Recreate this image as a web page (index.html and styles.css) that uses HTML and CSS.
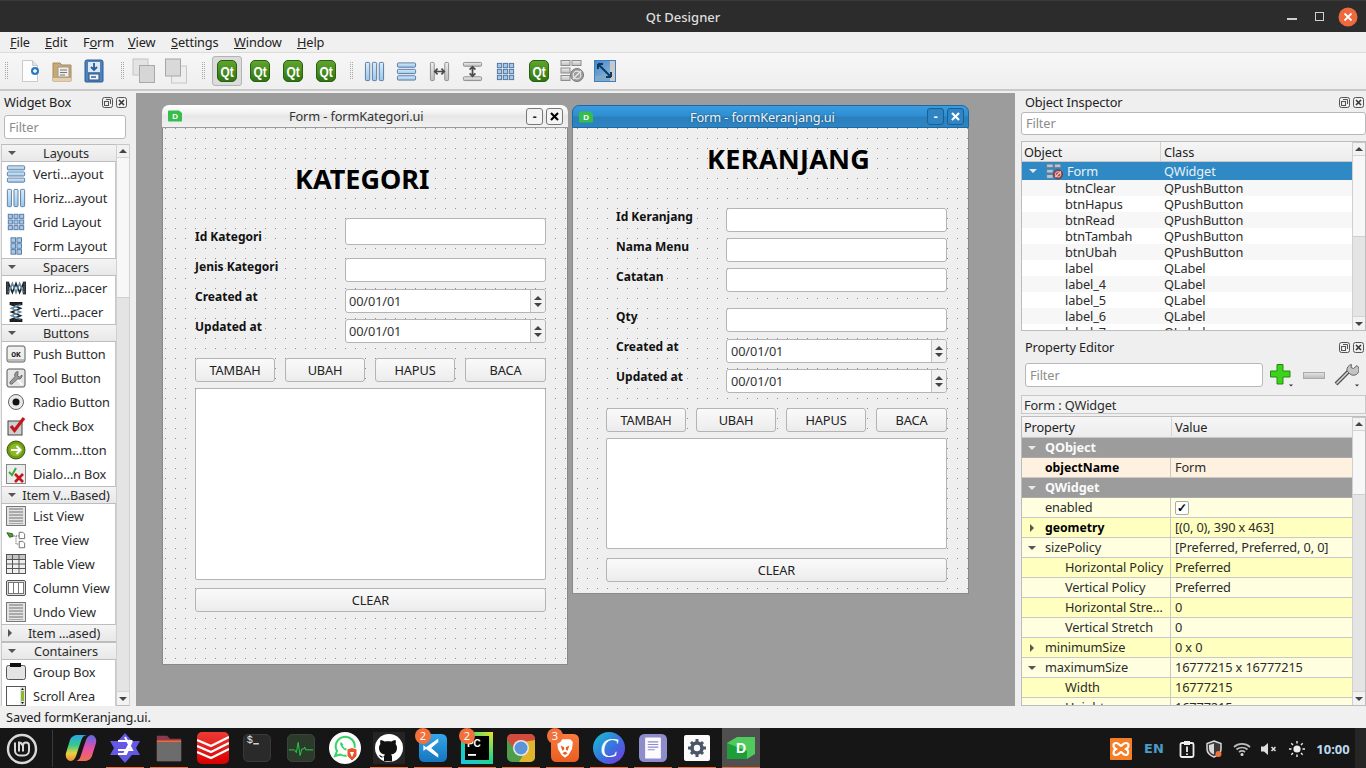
FILE: index.html
```html
<!DOCTYPE html>
<html lang="en">
<head>
<meta charset="utf-8">
<title>Qt Designer</title>
<link rel="stylesheet" href="styles.css">
</head>
<body>
<svg class="defs" aria-hidden="true">
<defs>
<linearGradient id="gq" x1="0" y1="0" x2="0" y2="1"><stop offset="0" stop-color="#5fa62e"/><stop offset="1" stop-color="#2f7410"/></linearGradient>
<linearGradient id="gb" x1="0" y1="0" x2="0" y2="1"><stop offset="0" stop-color="#d6ecfb"/><stop offset="1" stop-color="#9cc6ea"/></linearGradient>
<linearGradient id="gg" x1="0" y1="0" x2="0" y2="1"><stop offset="0" stop-color="#eeeeee"/><stop offset="1" stop-color="#bdbdbd"/></linearGradient>
<linearGradient id="gc1" x1="0" y1="0" x2="0" y2="1"><stop offset="0" stop-color="#2aa6e8"/><stop offset=".4" stop-color="#38c98a"/><stop offset=".7" stop-color="#e8d23c"/><stop offset="1" stop-color="#ef8a3c"/></linearGradient>
<linearGradient id="gc2" x1="0" y1="0" x2="0" y2="1"><stop offset="0" stop-color="#f0704c"/><stop offset=".5" stop-color="#e44fa8"/><stop offset="1" stop-color="#5a6ae6"/></linearGradient>
<linearGradient id="gcan" x1="0" y1="0" x2="1" y2="1"><stop offset="0" stop-color="#14c6cf"/><stop offset=".55" stop-color="#3a6fe0"/><stop offset="1" stop-color="#7a35e0"/></linearGradient>
<linearGradient id="gpc" x1="0" y1="1" x2="1" y2="0"><stop offset="0" stop-color="#19c3e8"/><stop offset=".55" stop-color="#21d789"/><stop offset="1" stop-color="#f5e020"/></linearGradient>
<linearGradient id="gvs" x1="0" y1="0" x2="0" y2="1"><stop offset="0" stop-color="#33a6e8"/><stop offset="1" stop-color="#1575c0"/></linearGradient>
<linearGradient id="gred" x1="0" y1="0" x2="0" y2="1"><stop offset="0" stop-color="#ee3b34"/><stop offset="1" stop-color="#d60000"/></linearGradient>
<linearGradient id="gbr" x1="0" y1="0" x2="0" y2="1"><stop offset="0" stop-color="#fb7a3c"/><stop offset="1" stop-color="#e85e20"/></linearGradient>
<linearGradient id="gadj" x1="0" y1="0" x2="1" y2="1"><stop offset="0" stop-color="#3f86c6"/><stop offset="1" stop-color="#a5c4dd"/></linearGradient>
<clipPath id="crnd"><rect width="28" height="28" rx="5"/></clipPath>

<symbol id="qt" viewBox="0 0 20 22"><rect x=".5" y=".5" width="19" height="21" rx="4.5" fill="url(#gq)" stroke="#2b5f12"/><text x="10" y="16.500" text-anchor="middle" class="qtxt" textLength="13" lengthAdjust="spacingAndGlyphs">Qt</text></symbol>

<symbol id="new" viewBox="0 0 20 24"><path d="M2.500 1.500h10l5 5v16h-15z" fill="#fdfdfd" stroke="#c9c9c9"/><path d="M12.500 1.500v5h5" fill="#e2e2e2" stroke="#c9c9c9"/><circle cx="15" cy="12" r="4" fill="#2b7bc4"/><path d="M13 12h4M15 10v4" stroke="#fff" stroke-width="1.400"/></symbol>
<symbol id="open" viewBox="0 0 20 24"><path d="M1 4h7l2 2h9v16H1z" fill="#c9a878" stroke="#a98a5c"/><rect x="6" y="8" width="11" height="10" fill="#f4efe5" stroke="#999"/><path d="M8 11h7M8 13.500h7M8 16h5" stroke="#777"/><path d="M1 19h18v3H1z" fill="#e3cfa8"/></symbol>
<symbol id="save" viewBox="0 0 20 24"><path d="M3 1h14a2 2 0 0 1 2 2v19a1 1 0 0 1-1 1H2a1 1 0 0 1-1-1V3a2 2 0 0 1 2-2z" fill="#4c82bd" stroke="#2b5b93"/><rect x="4" y="3" width="12" height="10" fill="#dfe9f4"/><path d="M10 4v6M7 8l3 3 3-3" stroke="#2b5b93" stroke-width="1.800" fill="none"/><rect x="5" y="15" width="10" height="6" fill="#f2f2f2" stroke="#29558a"/><path d="M7 18h5" stroke="#29558a" stroke-width="1.400"/></symbol>
<symbol id="copy1" viewBox="0 0 24 26"><rect x="1" y="1" width="15" height="16" fill="#e3e3e3" stroke="#c4c4c4"/><rect x="7.500" y="7.500" width="15" height="17" fill="#d6d6d6" stroke="#a9a9a9"/></symbol>
<symbol id="copy2" viewBox="0 0 24 26"><rect x="7.500" y="8" width="15" height="17" fill="#eeeeee" stroke="#c8c8c8"/><rect x="1.500" y="1" width="15" height="17" fill="#d9d9d9" stroke="#a6a6a6"/></symbol>

<symbol id="lh" viewBox="0 0 22 22"><g fill="url(#gb)" stroke="#56789f"><rect x="1.500" y="1.500" width="4.500" height="19" rx="1"/><rect x="8.750" y="1.500" width="4.500" height="19" rx="1"/><rect x="16" y="1.500" width="4.500" height="19" rx="1"/></g></symbol>
<symbol id="lv" viewBox="0 0 22 22"><g fill="url(#gb)" stroke="#56789f"><rect x="1.500" y="2" width="19" height="4.500" rx="1"/><rect x="1.500" y="8.750" width="19" height="4.500" rx="1"/><rect x="1.500" y="15.500" width="19" height="4.500" rx="1"/></g></symbol>
<symbol id="lg" viewBox="0 0 22 22"><g fill="#a8c8e8" stroke="#4f75a0"><rect x="2.500" y="2.500" width="4.500" height="4.500"/><rect x="8.750" y="2.500" width="4.500" height="4.500"/><rect x="15" y="2.500" width="4.500" height="4.500"/><rect x="2.500" y="8.750" width="4.500" height="4.500"/><rect x="8.750" y="8.750" width="4.500" height="4.500"/><rect x="15" y="8.750" width="4.500" height="4.500"/><rect x="2.500" y="15" width="4.500" height="4.500"/><rect x="8.750" y="15" width="4.500" height="4.500"/><rect x="15" y="15" width="4.500" height="4.500"/></g></symbol>
<symbol id="lf" viewBox="0 0 22 22"><g fill="#a8c8e8" stroke="#4f75a0"><rect x="5.500" y="2" width="5" height="5"/><rect x="12" y="2" width="5" height="5"/><rect x="5.500" y="8.500" width="5" height="5"/><rect x="12" y="8.500" width="5" height="5"/><rect x="5.500" y="15" width="5" height="5"/><rect x="12" y="15" width="5" height="5"/></g></symbol>
<symbol id="sh" viewBox="0 0 22 22"><g fill="url(#gg)" stroke="#8d8d8d"><rect x="1.500" y="1.500" width="4" height="19" rx="1"/><rect x="16.500" y="1.500" width="4" height="19" rx="1"/></g><path d="M7 11h8M9 8l-3 3 3 3M13 8l3 3-3 3" stroke="#4a4a4a" stroke-width="1.800" fill="none"/></symbol>
<symbol id="sv" viewBox="0 0 22 22"><g fill="url(#gg)" stroke="#8d8d8d"><rect x="1.500" y="1.500" width="19" height="4" rx="1"/><rect x="1.500" y="16.500" width="19" height="4" rx="1"/></g><path d="M11 6v10M8 9l3-3 3 3M8 13l3 3 3-3" stroke="#4a4a4a" stroke-width="1.800" fill="none"/></symbol>
<symbol id="broken" viewBox="0 0 24 24"><g fill="url(#gg)" stroke="#8d8d8d"><rect x="1" y="1.500" width="9" height="5"/><rect x="12" y="1.500" width="9" height="5"/><rect x="1" y="9" width="9" height="5"/><rect x="1" y="16.500" width="9" height="5"/></g><circle cx="17" cy="16" r="6.500" fill="#9c9c9c" stroke="#7a7a7a"/><path d="M13 20l8-8" stroke="#e6e6e6" stroke-width="1.600"/><circle cx="17" cy="16" r="3.800" fill="none" stroke="#e6e6e6" stroke-width="1.200"/></symbol>
<symbol id="brokenc" viewBox="0 0 24 24"><g fill="#b4c4d6" stroke="#66778c"><rect x="1" y="1.500" width="9" height="5"/><rect x="12" y="1.500" width="9" height="5"/><rect x="1" y="9" width="9" height="5"/><rect x="1" y="16.500" width="9" height="5"/></g><circle cx="17" cy="16" r="6.500" fill="#a84848" stroke="#743030"/><path d="M13 20l8-8" stroke="#e8d5d5" stroke-width="1.600"/><circle cx="17" cy="16" r="3.800" fill="none" stroke="#e8d5d5" stroke-width="1.200"/></symbol>
<symbol id="adj" viewBox="0 0 22 22"><rect x=".5" y=".5" width="21" height="21" fill="url(#gadj)" stroke="#3f7ec0"/><rect x="16" y="1" width="5" height="20" fill="#c9c9c9"/><rect x="1" y="16" width="15" height="5" fill="#7ea9c9"/><path d="M4 4l13 13M4 4h5M4 4v5M17 17h-5M17 17v-5" stroke="#0d3a63" stroke-width="2" fill="none"/></symbol>

<symbol id="spch" viewBox="0 0 22 18"><g stroke="#222" fill="#3c4a54"><rect x=".5" y="2.500" width="2.500" height="13"/><rect x="19" y="2.500" width="2.500" height="13"/></g><path d="M3 4l4 10 4-10 4 10 4-10" stroke="#222" stroke-width="1.700" fill="none"/><path d="M3 14l4-10 4 10 4-10 4 10" stroke="#5f8aa8" stroke-width="1.700" fill="none"/></symbol>
<symbol id="spcv" viewBox="0 0 18 22"><g stroke="#111" fill="#222"><rect x="2.500" y=".5" width="13" height="2.500"/><rect x="2.500" y="19" width="13" height="2.500"/></g><path d="M4 3l10 4-10 4 10 4-10 4" stroke="#222" stroke-width="1.700" fill="none"/><path d="M14 3l-10 4 10 4-10 4 10 4" stroke="#5f8aa8" stroke-width="1.700" fill="none"/></symbol>
<symbol id="ok" viewBox="0 0 20 20"><rect x="1" y="2" width="18" height="16" rx="2" fill="#efefef" stroke="#5c5c5c"/><rect x="2" y="15" width="16" height="2" fill="#bbb"/><text x="10" y="12.500" text-anchor="middle" class="oktxt">OK</text></symbol>
<symbol id="tool" viewBox="0 0 20 20"><rect x="1" y="1" width="18" height="18" rx="2" fill="#e6e6e6" stroke="#555"/><path d="M12 3.500a3.500 3.500 0 0 0-3 5L4 14c-1 1 1 3 2 2l5.500-5a3.500 3.500 0 0 0 4.500-4l-2.500 2-2-1 .5-2.500z" fill="#9a9a9a" stroke="#555" stroke-width=".8"/><path d="M12 12l4 5" stroke="#fff" stroke-width="2"/></symbol>
<symbol id="radio" viewBox="0 0 20 20"><circle cx="10" cy="10" r="7.500" fill="#e8e8e8" stroke="#666"/><circle cx="10" cy="10" r="3.500" fill="#111"/></symbol>
<symbol id="check" viewBox="0 0 20 20"><rect x="2" y="5" width="14" height="14" fill="#cfcfcf" stroke="#444"/><path d="M5 10l3.500 4.500L18 2" stroke="#c4161c" stroke-width="3.200" fill="none"/></symbol>
<symbol id="cmd" viewBox="0 0 20 20"><circle cx="10" cy="10" r="9" fill="#6c9a12" stroke="#3e5c08"/><circle cx="10" cy="10" r="6.500" fill="#8cb926"/><path d="M5 10h9M10.500 6l4 4-4 4" stroke="#fff" stroke-width="2" fill="none"/></symbol>
<symbol id="dlg" viewBox="0 0 20 20"><rect x=".5" y=".5" width="19" height="19" fill="#ececec" stroke="#888"/><path d="M3 8l3 3 4-7" stroke="#41a741" stroke-width="2" fill="none"/><path d="M9 10l8 8M17 10l-8 8" stroke="#c4161c" stroke-width="2.600"/></symbol>
<symbol id="list" viewBox="0 0 20 20"><rect x=".5" y=".5" width="19" height="19" fill="#e2e2e2" stroke="#777"/><rect x="3" y="2" width="14" height="16" fill="#aaaaaa"/><path d="M3 4.500h14M3 7.500h14M3 10.500h14M3 13.500h14M3 16.500h14" stroke="#e2e2e2"/></symbol>
<symbol id="tree" viewBox="0 0 22 20"><path d="M1 2l6 1 1 3-4 1z" fill="#4f9a3c" stroke="#2d5a1f"/><path d="M9 5.500h5M11 5.500v9h3" stroke="#444" stroke-dasharray="1 1" fill="none"/><path d="M14.500 1.500h4l2 2v5h-6z" fill="#fff" stroke="#666"/><path d="M14.500 11.500h4l2 2v5h-6z" fill="#fff" stroke="#666"/></symbol>
<symbol id="table" viewBox="0 0 20 20"><rect x=".5" y=".5" width="19" height="19" fill="#efefef" stroke="#555"/><rect x="1" y="1" width="18" height="4" fill="#c6c6c6"/><path d="M.5 5.500h19M.5 10h19M.5 14.500h19M6.500 .5v19M13 .5v19" stroke="#555"/></symbol>
<symbol id="column" viewBox="0 0 20 20"><rect x=".5" y="2.500" width="19" height="15" rx="1.500" fill="#dcdcdc" stroke="#555"/><rect x="2.500" y="4.500" width="15" height="11" fill="#fff" stroke="#777"/><path d="M7.500 4.500v11M12.500 4.500v11" stroke="#777"/></symbol>
<symbol id="group" viewBox="0 0 20 20"><rect x=".5" y="3.500" width="19" height="14" rx="2" fill="#e4e4e4" stroke="#555"/><rect x="4" y="1" width="11" height="4" fill="#111"/></symbol>
<symbol id="scroll" viewBox="0 0 20 20"><rect x=".5" y=".5" width="19" height="19" fill="#fff" stroke="#555"/><rect x="14" y="1" width="5" height="18" fill="#e4e4e4"/><rect x="15" y="5" width="3" height="10" fill="#8cb926"/><path d="M15 4l1.500-2L18 4zM15 16l1.500 2 1.500-2z" fill="#111"/></symbol>

<symbol id="float" viewBox="0 0 11 11"><rect x=".5" y=".5" width="10" height="10" rx="2" fill="none" stroke="#555"/><path d="M4 2.500h4.500V7" fill="none" stroke="#555"/><rect x="2.500" y="4.500" width="4" height="4" fill="none" stroke="#555"/></symbol>
<symbol id="close" viewBox="0 0 11 11"><rect x=".5" y=".5" width="10" height="10" rx="2" fill="none" stroke="#555"/><path d="M3 3l5 5M8 3l-5 5" stroke="#333" stroke-width="1.500"/></symbol>
<symbol id="plus" viewBox="0 0 24 24"><path d="M8 1.500h6v6.500h7v6h-7v7H8v-7H1.500V8H8z" fill="#3ed21e" stroke="#1c8f0a"/><path d="M20 21.500h4l-2 2z" fill="#333"/></symbol>
<symbol id="wrench" viewBox="0 0 26 26"><path d="M3 22L17 8" stroke="#555" stroke-width="4"/><path d="M3.500 21.500L17 8" stroke="#ddd" stroke-width="1.500"/><path d="M24 3.500l-3.500 3-2.500-1 .5-3A5.500 5.500 0 0 0 14 9l3 3a5.500 5.500 0 0 0 7-8.500z" fill="#c4c4c4" stroke="#666"/><path d="M22 22.500h4l-2 2z" fill="#333"/></symbol>
<symbol id="dicon" viewBox="0 0 16 12"><path d="M1 1.500a1 1 0 0 1 1-1h10l3 2.500v7.500a1 1 0 0 1-1 1H2a1 1 0 0 1-1-1z" fill="#36bd4c"/><text x="8" y="9" text-anchor="middle" class="dtxt">D</text></symbol>
<symbol id="wx" viewBox="0 0 17 17"><path d="M4.500 4.500l8 8M12.500 4.500l-8 8" stroke="currentColor" stroke-width="2.400"/></symbol>
<symbol id="wcl" viewBox="0 0 20 20"><circle cx="10" cy="10" r="9.500" fill="#ee6a3c"/><path d="M6.500 6.500l7 7M13.500 6.500l-7 7" stroke="#fff" stroke-width="1.800"/></symbol>

<symbol id="t-mint" viewBox="0 0 32 32"><circle cx="16" cy="16" r="14" fill="none" stroke="#d8d8d8" stroke-width="2.400"/><path d="M9 9.500v8a5 5 0 0 0 5 5h4a5 5 0 0 0 5-5v-5a3 3 0 0 0-6 0v6M16 12.500a3 3 0 0 0-3-3v9" fill="none" stroke="#d8d8d8" stroke-width="2"/></symbol>
<symbol id="t-cop" viewBox="0 0 32 32"><path d="M13 3h9c-3 0-5 2-6 6l-5 15c-1 3-3 5-6 5-3-1-5-4-4-8l4-13c1-3 4-5 8-5z" fill="url(#gc1)"/><path transform="rotate(180 16 16)" d="M13 3h9c-3 0-5 2-6 6l-5 15c-1 3-3 5-6 5-3-1-5-4-4-8l4-13c1-3 4-5 8-5z" fill="url(#gc2)"/></symbol>
<symbol id="t-quark" viewBox="0 0 32 32"><path d="M16 1l7 8h8l-4 7 4 7h-8l-7 8-7-8H1l4-7-4-7h8z" fill="#6458e4"/><path d="M9 9h13l-7 13M23 9l-6 13h-8M16 5l7 13H9" fill="none" stroke="#fff" stroke-width="2"/></symbol>
<symbol id="t-folder" viewBox="0 0 32 32"><path d="M3 3h11l3 3h12v24H3z" fill="#8a3a4c"/><rect x="3" y="8" width="26" height="2" fill="#e8703c"/><rect x="3" y="10" width="26" height="20" rx="1" fill="#6c6c6c"/></symbol>
<symbol id="t-todo" viewBox="0 0 32 32"><rect width="32" height="32" rx="5" fill="url(#gred)"/><path d="M0 13l14 6 18-9M0 19l14 6 18-9M0 25l14 6 18-9" transform="translate(0 -5)" fill="none" stroke="#fff" stroke-width="2.400"/></symbol>
<symbol id="t-term" viewBox="0 0 30 30"><rect x=".5" y=".5" width="29" height="29" rx="5" fill="#2a2a2a" stroke="#3c3c3c"/><text x="4" y="10" class="tt">$</text><path d="M11 10.500h6" stroke="#eee" stroke-width="1.400"/></symbol>
<symbol id="t-mon" viewBox="0 0 30 30"><rect x=".5" y=".5" width="29" height="29" rx="5" fill="#2c3a2c" stroke="#3c4a3c"/><path d="M2 17h6l2 3 2-11 2 14 2-7h2l1-2 1 3h8" fill="none" stroke="#29d34a" stroke-width="1"/></symbol>
<symbol id="t-wa" viewBox="0 0 32 32"><circle cx="16" cy="16" r="16" fill="#fdfdfd"/><path d="M6 24l2-5a9.500 9.500 0 1 1 3.500 3.500z" fill="none" stroke="#35d366" stroke-width="2"/><path d="M12 10c-1.500 1-1 3 1 5.500s4 3.500 5.500 2.500l-1.500-2-1 .5-2.500-3 .8-1z" fill="#35d366"/><path d="M18 17l5-1.500 5 1.500v7l-5 5-5-5z" fill="#e8552c" stroke="#fff"/><path d="M21 20h4l-1 3-1 2-1-2z" fill="#fff"/></symbol>
<symbol id="t-gh" viewBox="0 0 32 32"><rect width="32" height="32" fill="#242424"/><circle cx="16" cy="16" r="14" fill="#fff"/><path d="M11 29v-4c-3 1-4 0-5-2 1 0 2 1 3 1.500 1 .5 2 0 2-.5l1-1.500c-3-.5-6-2-6-6.500 0-1.500.5-3 1.500-4-.5-1-.5-2.500 0-4 1.500 0 3 1 4 1.500 2-.5 5-.5 7 0 1-.5 2.500-1.500 4-1.500.5 1.500.5 3 0 4 1 1 1.500 2.500 1.500 4 0 4.500-3 6-6 6.500 1 1 1 2 1 3v4z" fill="#111"/></symbol>
<symbol id="t-vs" viewBox="0 0 32 32"><rect width="32" height="32" rx="6" fill="url(#gvs)"/><path d="M22 5v22l-14-10-3 2.500v-7L8 15zM22 9l-8 7 8 7z" fill="#fff" fill-rule="evenodd"/></symbol>
<symbol id="t-pc" viewBox="0 0 32 32"><rect width="32" height="32" fill="url(#gpc)"/><rect x="4" y="4" width="24" height="24" fill="#000"/><text x="6" y="15" class="pctx">PC</text><rect x="7" y="22" width="8" height="1.800" fill="#fff"/></symbol>
<symbol id="t-chrome" viewBox="0 0 28 28"><g clip-path="url(#crnd)"><rect width="28" height="28" fill="#4f9c4a"/><path d="M0 0h28v8H14L7 14 0 6z" fill="#d34b3c"/><path d="M28 6v22H12l7-12-3-8z" fill="#e0b72c"/></g><circle cx="14" cy="14" r="8" fill="#e8e8e8"/><circle cx="14" cy="14" r="6.500" fill="#5b94d8"/></symbol>
<symbol id="t-brave" viewBox="0 0 32 32"><rect width="32" height="32" rx="6" fill="url(#gbr)"/><path d="M10 6h12l3 3-1 8-4 7-4 3-4-3-4-7-1-8z" fill="#fff"/><path d="M11 13l4 2v3l-2 1zM21 13l-4 2v3l2 1zM13 22l3-2 3 2-3 2z" fill="#e85e20"/></symbol>
<symbol id="t-canva" viewBox="0 0 32 32"><circle cx="16" cy="16" r="16" fill="url(#gcan)"/><text x="16" y="25" text-anchor="middle" class="canv">C</text></symbol>
<symbol id="t-note" viewBox="0 0 32 32"><rect width="32" height="32" rx="6" fill="#8f8ccc"/><rect x="7" y="4" width="18" height="24" rx="1" fill="#fbfbff"/><path d="M10 9h12M10 12h12M10 15h12M10 18h8" stroke="#8f8ccc" stroke-width="1.200"/></symbol>
<symbol id="t-set" viewBox="0 0 26 26"><rect width="26" height="26" rx="2" fill="#fbfbfb"/><circle cx="13" cy="13" r="5" fill="none" stroke="#4a5568" stroke-width="3.600"/><path d="M13 4v4M13 18v4M4 13h4M18 13h4M7 7l3 3M16 16l3 3M19 7l-3 3M10 16l-3 3" stroke="#4a5568" stroke-width="3"/></symbol>
<symbol id="t-des" viewBox="0 0 30 24"><path d="M1 7l10-6h18v17l-8 5H1z" fill="#4ecb5c"/><path d="M1 7l20 8v8H1z" fill="#1e9e3a"/><text x="15" y="17" text-anchor="middle" class="desx">D</text></symbol>
<symbol id="t-xampp" viewBox="0 0 22 22"><rect width="22" height="22" rx="1" fill="#f57e26"/><path d="M6 5c3 0 4 3 5 3s2-3 5-3 3 3 1.500 5L16 11l1.500 1c1.500 2 .5 5-1.500 5-3 0-4-3-5-3s-2 3-5 3-3-3-1.500-5L6 11 4.500 10C3 8 3 5 6 5z" fill="none" stroke="#fff" stroke-width="2.200"/></symbol>
<symbol id="t-clip" viewBox="0 0 16 18"><rect x="1.500" y="3" width="13" height="14" rx="1.500" fill="none" stroke="#eee" stroke-width="1.800"/><rect x="5" y="1" width="6" height="4" fill="#eee"/><path d="M8 6.500v5.500M8 13.500v1.500" stroke="#eee" stroke-width="1.800"/></symbol>
<symbol id="t-shield" viewBox="0 0 18 18"><path d="M9 1l7 2.500V9c0 4-3 6.500-7 8-4-1.500-7-4-7-8V3.500z" fill="#3a3a3a" stroke="#d8d8d8" stroke-width="1.500"/><path d="M9 3.500v11c-3-1-5-3-5-6V5z" fill="#d8d8d8"/><circle cx="13.500" cy="14" r="3" fill="#f2703a"/></symbol>
<symbol id="t-wifi" viewBox="0 0 18 14"><path d="M1 5a12 12 0 0 1 16 0M3.500 7.500a8.500 8.500 0 0 1 11 0M6 10a5 5 0 0 1 6 0" fill="none" stroke="#bbb" stroke-width="1.700"/><circle cx="9" cy="12.500" r="1.500" fill="#ddd"/></symbol>
<symbol id="t-vol" viewBox="0 0 18 14"><path d="M1 4.500h3L8 1v12L4 9.500H1z" fill="#ddd"/><path d="M11.500 5l4 4M15.500 5l-4 4" stroke="#ddd" stroke-width="1.600"/></symbol>
<symbol id="t-sun" viewBox="0 0 16 16"><circle cx="8" cy="8" r="3.600" fill="#eee"/><path d="M8 0v2.500M8 13.500V16M0 8h2.500M13.500 8H16M2.300 2.300L4 4M12 12l1.700 1.700M13.700 2.300L12 4M4 12l-1.700 1.700" stroke="#eee" stroke-width="1.400"/></symbol>
</defs>
</svg>

<div class="app">
  <header class="titlebar">
    <span class="apptitle">Qt Designer</span>
    <div class="wctl">
      <span class="wmin"></span>
      <span class="wmax"></span>
      <svg class="wclose"><use href="#wcl"/></svg>
    </div>
  </header>

  <nav class="menubar">
    <span class="mi m-file"><u>F</u>ile</span>
    <span class="mi m-edit"><u>E</u>dit</span>
    <span class="mi m-form">F<u>o</u>rm</span>
    <span class="mi m-view"><u>V</u>iew</span>
    <span class="mi m-set"><u>S</u>ettings</span>
    <span class="mi m-win"><u>W</u>indow</span>
    <span class="mi"><u>H</u>elp</span>
  </nav>

  <div class="toolbar">
    <span class="hd hd1"></span>
    <span class="tb w32"><svg class="i20x24"><use href="#new"/></svg></span>
    <span class="tb w32"><svg class="i20x24"><use href="#open"/></svg></span>
    <span class="tb w32"><svg class="i20x24"><use href="#save"/></svg></span>
    <span class="hd hd2"></span>
    <span class="tb w32"><svg class="i24x26"><use href="#copy1"/></svg></span>
    <span class="tb w32"><svg class="i24x26"><use href="#copy2"/></svg></span>
    <span class="hd hd3"></span>
    <span class="tb"><span class="tbsel"><svg class="i20x22"><use href="#qt"/></svg></span></span>
    <span class="tb"><svg class="i20x22"><use href="#qt"/></svg></span>
    <span class="tb"><svg class="i20x22"><use href="#qt"/></svg></span>
    <span class="tb"><svg class="i20x22"><use href="#qt"/></svg></span>
    <span class="hd hd4"></span>
    <span class="tb w32"><svg class="i21"><use href="#lh"/></svg></span>
    <span class="tb"><svg class="i21"><use href="#lv"/></svg></span>
    <span class="tb"><svg class="i21"><use href="#sh"/></svg></span>
    <span class="tb"><svg class="i21"><use href="#sv"/></svg></span>
    <span class="tb"><svg class="i21"><use href="#lg"/></svg></span>
    <span class="tb"><svg class="i20x22"><use href="#qt"/></svg></span>
    <span class="tb"><svg class="i24"><use href="#broken"/></svg></span>
    <span class="tb"><svg class="i22"><use href="#adj"/></svg></span>
  </div>

  <main class="main">
    <aside class="leftdock">
      <div class="docktitle">
        <span>Widget Box</span>
        <span class="dockbtns"><svg class="i11"><use href="#float"/></svg><svg class="i11"><use href="#close"/></svg></span>
      </div>
      <div class="filter wbfilter">Filter</div>
      <div class="wbox">
        <div class="wlist">
          <div class="cat"><i class="adown"></i><span>Layouts</span></div>
          <div class="wi"><svg class="i20"><use href="#lv"/></svg>Verti…ayout</div>
          <div class="wi"><svg class="i20"><use href="#lh"/></svg>Horiz…ayout</div>
          <div class="wi"><svg class="i20"><use href="#lg"/></svg>Grid Layout</div>
          <div class="wi"><svg class="i20"><use href="#lf"/></svg>Form Layout</div>
          <div class="cat"><i class="adown"></i><span>Spacers</span></div>
          <div class="wi"><svg class="i20"><use href="#spch"/></svg>Horiz…pacer</div>
          <div class="wi"><svg class="i20"><use href="#spcv"/></svg>Verti…pacer</div>
          <div class="cat"><i class="adown"></i><span>Buttons</span></div>
          <div class="wi"><svg class="i20"><use href="#ok"/></svg>Push Button</div>
          <div class="wi"><svg class="i20"><use href="#tool"/></svg>Tool Button</div>
          <div class="wi"><svg class="i20"><use href="#radio"/></svg>Radio Button</div>
          <div class="wi"><svg class="i20"><use href="#check"/></svg>Check Box</div>
          <div class="wi"><svg class="i20"><use href="#cmd"/></svg>Comm…tton</div>
          <div class="wi"><svg class="i20"><use href="#dlg"/></svg>Dialo…n Box</div>
          <div class="cat"><i class="adown"></i><span>Item V…Based)</span></div>
          <div class="wi"><svg class="i20"><use href="#list"/></svg>List View</div>
          <div class="wi"><svg class="i20"><use href="#tree"/></svg>Tree View</div>
          <div class="wi"><svg class="i20"><use href="#table"/></svg>Table View</div>
          <div class="wi"><svg class="i20"><use href="#column"/></svg>Column View</div>
          <div class="wi"><svg class="i20"><use href="#list"/></svg>Undo View</div>
          <div class="cat"><i class="aright"></i><span>Item …ased)</span></div>
          <div class="cat"><i class="adown"></i><span>Containers</span></div>
          <div class="wi"><svg class="i20"><use href="#group"/></svg>Group Box</div>
          <div class="wi"><svg class="i20"><use href="#scroll"/></svg>Scroll Area</div>
        </div>
        <div class="sbar">
          <span class="sb-btn"><i class="sup"></i></span>
          <span class="sb-handle h-wb"></span>
          <span class="sb-track"></span>
          <span class="sb-btn sb-end"><i class="sdn"></i></span>
        </div>
      </div>
    </aside>

    <section class="mdi">
      <article class="win win-kat">
        <div class="wt">
          <svg class="dicon"><use href="#dicon"/></svg>
          <span class="wtt wtt-kat">Form - formKategori.ui</span>
          <span class="wb">-</span><span class="wb wbx"><svg class="wxi"><use href="#wx"/></svg></span>
        </div>
        <div class="fb fb-kat">
          <h1 class="fh fh-kat">KATEGORI</h1>
          <div class="row">
            <label class="lb l10">Id Kategori</label><span class="inp"></span>
          </div>
          <div class="row mt16">
            <label class="lb">Jenis Kategori</label><span class="inp"></span>
          </div>
          <div class="row mt7 rd">
            <label class="lb ln1">Created at</label>
            <span class="inp date"><span class="dv">00/01/01</span><span class="spin"><i class="sup"></i><i class="sdn"></i></span></span>
          </div>
          <div class="row mt7 rd">
            <label class="lb ln1">Updated at</label>
            <span class="inp date"><span class="dv">00/01/01</span><span class="spin"><i class="sup"></i><i class="sdn"></i></span></span>
          </div>
          <div class="btns mt16">
            <span class="btn">TAMBAH</span><span class="btn">UBAH</span><span class="btn">HAPUS</span><span class="btn last">BACA</span>
          </div>
          <div class="ta ta-kat"></div>
          <span class="btn clear clear-kat">CLEAR</span>
        </div>
      </article>

      <article class="win win-ker">
        <div class="wt wt-act">
          <svg class="dicon"><use href="#dicon"/></svg>
          <span class="wtt wtt-ker">Form - formKeranjang.ui</span>
          <span class="wb">-</span><span class="wb wbx"><svg class="wxi"><use href="#wx"/></svg></span>
        </div>
        <div class="fb fb-ker">
          <h1 class="fh fh-ker">KERANJANG</h1>
          <div class="row rk"><label class="lb">Id Keranjang</label><span class="inp"></span></div>
          <div class="row rk mt6"><label class="lb">Nama Menu</label><span class="inp"></span></div>
          <div class="row rk mt6"><label class="lb">Catatan</label><span class="inp"></span></div>
          <div class="row rk mt16"><label class="lb">Qty</label><span class="inp"></span></div>
          <div class="row rk mt7 rd">
            <label class="lb ln1">Created at</label>
            <span class="inp date"><span class="dv">00/01/01</span><span class="spin"><i class="sup"></i><i class="sdn"></i></span></span>
          </div>
          <div class="row rk mt7 rd">
            <label class="lb ln1">Updated at</label>
            <span class="inp date"><span class="dv">00/01/01</span><span class="spin"><i class="sup"></i><i class="sdn"></i></span></span>
          </div>
          <div class="btns mt16">
            <span class="btn">TAMBAH</span><span class="btn">UBAH</span><span class="btn">HAPUS</span><span class="btn last">BACA</span>
          </div>
          <div class="ta ta-ker"></div>
          <span class="btn clear clear-ker">CLEAR</span>
        </div>
      </article>
    </section>

    <aside class="rightdock">
      <div class="docktitle rtitle">
        <span>Object Inspector</span>
        <span class="dockbtns"><svg class="i11"><use href="#float"/></svg><svg class="i11"><use href="#close"/></svg></span>
      </div>
      <div class="filter oifilter">Filter</div>
      <div class="oi">
        <div class="oi-main">
          <div class="thead oi-cols"><span>Object</span><span>Class</span></div>
          <div class="oir sel"><i class="adown white"></i><svg class="i18"><use href="#brokenc"/></svg><span class="fname">Form</span><span class="cls">QWidget</span></div>
          <div class="oir alt"><span class="oname">btnClear</span><span class="cls">QPushButton</span></div>
          <div class="oir"><span class="oname">btnHapus</span><span class="cls">QPushButton</span></div>
          <div class="oir alt"><span class="oname">btnRead</span><span class="cls">QPushButton</span></div>
          <div class="oir"><span class="oname">btnTambah</span><span class="cls">QPushButton</span></div>
          <div class="oir alt"><span class="oname">btnUbah</span><span class="cls">QPushButton</span></div>
          <div class="oir"><span class="oname">label</span><span class="cls">QLabel</span></div>
          <div class="oir alt"><span class="oname">label_4</span><span class="cls">QLabel</span></div>
          <div class="oir"><span class="oname">label_5</span><span class="cls">QLabel</span></div>
          <div class="oir alt"><span class="oname">label_6</span><span class="cls">QLabel</span></div>
          <div class="oir"><span class="oname">label_7</span><span class="cls">QLabel</span></div>
        </div>
        <div class="sbar">
          <span class="sb-btn"><i class="sup"></i></span>
          <span class="sb-handle h-oi"></span>
          <span class="sb-track"></span>
          <span class="sb-btn sb-end"><i class="sdn"></i></span>
        </div>
      </div>
      <div class="docktitle rtitle pe-title">
        <span>Property Editor</span>
        <span class="dockbtns"><svg class="i11"><use href="#float"/></svg><svg class="i11"><use href="#close"/></svg></span>
      </div>
      <div class="pe-tools">
        <div class="filter pefilter">Filter</div>
        <svg class="i24 plus"><use href="#plus"/></svg>
        <span class="minus"></span>
        <svg class="i26"><use href="#wrench"/></svg>
      </div>
      <div class="pe-obj">Form : QWidget</div>
      <div class="pe">
        <div class="pe-main">
          <div class="thead pe-cols"><span>Property</span><span>Value</span></div>
          <div class="pr grp"><span class="pk"><i class="adown white"></i>QObject</span></div>
          <div class="pr peach"><span class="pk"><b>objectName</b></span><span class="pv">Form</span></div>
          <div class="pr grp"><span class="pk"><i class="adown white"></i>QWidget</span></div>
          <div class="pr y1"><span class="pk">enabled</span><span class="pv"><span class="cb">✓</span></span></div>
          <div class="pr y2"><span class="pk"><i class="aright"></i><b>geometry</b></span><span class="pv">[(0, 0), 390 x 463]</span></div>
          <div class="pr y1"><span class="pk"><i class="adown"></i>sizePolicy</span><span class="pv">[Preferred, Preferred, 0, 0]</span></div>
          <div class="pr y2"><span class="pk sub">Horizontal Policy</span><span class="pv">Preferred</span></div>
          <div class="pr y1"><span class="pk sub">Vertical Policy</span><span class="pv">Preferred</span></div>
          <div class="pr y2"><span class="pk sub">Horizontal Stre…</span><span class="pv">0</span></div>
          <div class="pr y1"><span class="pk sub">Vertical Stretch</span><span class="pv">0</span></div>
          <div class="pr y2"><span class="pk"><i class="aright"></i>minimumSize</span><span class="pv">0 x 0</span></div>
          <div class="pr y1"><span class="pk"><i class="adown"></i>maximumSize</span><span class="pv">16777215 x 16777215</span></div>
          <div class="pr y2"><span class="pk sub">Width</span><span class="pv">16777215</span></div>
          <div class="pr y1"><span class="pk sub">Height</span><span class="pv">16777215</span></div>
        </div>
        <div class="sbar">
          <span class="sb-btn"><i class="sup"></i></span>
          <span class="sb-handle h-pe"></span>
          <span class="sb-track"></span>
          <span class="sb-btn sb-end"><i class="sdn"></i></span>
        </div>
      </div>
    </aside>
  </main>

  <div class="status">Saved formKeranjang.ui.</div>

  <footer class="taskbar">
    <span class="t-menu"><svg class="i32"><use href="#t-mint"/></svg></span>
    <span class="t-sep"></span>
    <span class="task"><svg class="i32"><use href="#t-cop"/></svg></span>
    <span class="task on"><svg class="i32"><use href="#t-quark"/></svg></span>
    <span class="task on"><svg class="i30"><use href="#t-folder"/></svg></span>
    <span class="task"><svg class="i32"><use href="#t-todo"/></svg></span>
    <span class="task"><svg class="i28"><use href="#t-term"/></svg></span>
    <span class="task"><svg class="i28"><use href="#t-mon"/></svg></span>
    <span class="task"><svg class="i32"><use href="#t-wa"/></svg></span>
    <span class="task on"><svg class="i32"><use href="#t-gh"/></svg></span>
    <span class="task on"><svg class="i28"><use href="#t-vs"/></svg><span class="badge">2</span></span>
    <span class="task on"><svg class="i32"><use href="#t-pc"/></svg><span class="badge">2</span></span>
    <span class="task on"><svg class="i28"><use href="#t-chrome"/></svg></span>
    <span class="task on"><svg class="i28"><use href="#t-brave"/></svg><span class="badge">3</span></span>
    <span class="task on"><svg class="i32"><use href="#t-canva"/></svg></span>
    <span class="task on"><svg class="i28"><use href="#t-note"/></svg></span>
    <span class="task on"><svg class="i26"><use href="#t-set"/></svg></span>
    <span class="task on act"><svg class="i30x24"><use href="#t-des"/></svg></span>
    <div class="tray">
      <span class="ty ty-x"><svg class="i22"><use href="#t-xampp"/></svg></span>
      <span class="ty ty-en">EN</span>
      <span class="ty ty-c"><svg class="i18"><use href="#t-clip"/></svg></span>
      <span class="ty ty-s"><svg class="i18"><use href="#t-shield"/></svg></span>
      <span class="ty ty-c"><svg class="i18"><use href="#t-wifi"/></svg></span>
      <span class="ty ty-s"><svg class="i18"><use href="#t-vol"/></svg></span>
      <span class="ty ty-s"><svg class="i16"><use href="#t-sun"/></svg></span>
      <span class="ty ty-t">10:00</span>
      <span class="ty-end"></span>
    </div>
  </footer>
</div>
</body>
</html>
```
FILE: styles.css
```css
*{box-sizing:border-box}
html,body{margin:0;padding:0}
body{width:1366px;height:768px;overflow:hidden;font:12.75px/16px "Noto Sans","Open Sans",sans-serif;letter-spacing:-.12px;color:#2b2b2b;background:#efefef}
.defs{position:absolute;width:0;height:0}
.qtxt{font:bold 15px "Liberation Sans",sans-serif;fill:#fff}
.oktxt{font:bold 8px "Liberation Mono",monospace;fill:#222}
.dtxt{font:bold 8px "Liberation Sans",sans-serif;fill:#fff}
.tt{font:11px "Liberation Mono",monospace;fill:#eee}
.pctx{font:bold 10px "Liberation Sans",sans-serif;fill:#fff}
.canv{font:italic 27px "Liberation Serif",serif;fill:#fff}
.desx{font:bold 14px "Liberation Sans",sans-serif;fill:#fff}

.i11{width:11px;height:11px}.i16{width:16px;height:16px}.i18{width:18px;height:18px}.i20{width:20px;height:20px}
.i21{width:21px;height:21px}.i22{width:22px;height:22px}.i24{width:24px;height:24px}.i26{width:26px;height:26px}
.i28{width:28px;height:28px}.i30{width:30px;height:30px}.i32{width:32px;height:32px}
.i20x24{width:20px;height:24px}.i24x26{width:24px;height:26px}.i20x22{width:20px;height:22px}.i30x24{width:30px;height:24px}

.app{width:1366px;height:768px;display:flex;flex-direction:column}

.titlebar{position:relative;flex:0 0 32px;background:#2c2c2c;border-top:1px solid #3a3a3a;display:flex;align-items:center;justify-content:center;color:#dedede}
.apptitle{font-size:13px;font-weight:500;letter-spacing:0}
.wctl{position:absolute;right:0;top:0;height:31px;display:flex;align-items:center}
.wmin{width:10px;height:2px;background:#cfcfcf;margin-right:18px;margin-top:5px}
.wmax{width:9px;height:9px;border:1.5px solid #cfcfcf;margin-right:14px}
.wclose{width:20px;height:20px;margin-right:8px}

.menubar{flex:0 0 21px;background:#f0f0f0;border-bottom:1px solid #dcdcdc;display:flex;align-items:center;padding:0 0 0 10px;color:#222}
.mi{flex:none}
.m-file{width:35px}.m-edit{width:38px}.m-form{width:45px}.m-view{width:43px}.m-set{width:63px}.m-win{width:63px}

.toolbar{flex:0 0 38px;background:linear-gradient(#f6f6f6,#efefef);border-bottom:2px solid #c9c9c9;display:flex;align-items:center}
.tb{width:33px;height:30px;display:flex;align-items:center;justify-content:center;flex:none}
.w32{width:32px}
.tbsel{width:30px;height:30px;background:#dcdcdc;border:1px solid #b4b4b4;border-radius:3px;display:flex;align-items:center;justify-content:center}
.hd{width:3px;height:18px;flex:none;background-image:radial-gradient(circle at .5px .5px,#a8a8a8 .5px,transparent .6px);background-size:2px 2px}
.hd1{margin:0 6px 0 5px}.hd2{margin:0 4px 0 11px}.hd3{margin:0 5px 0 10px}.hd4{margin:0 5px 0 8px}

.main{flex:0 0 615px;display:flex;background:#efefef;overflow:hidden}
.leftdock{flex:0 0 130px;display:flex;flex-direction:column;padding-left:1px}
.docktitle{height:22px;flex:none;display:flex;align-items:center;justify-content:space-between;padding:0 3px 0 3px;color:#222}
.dockbtns{display:flex;gap:3px;align-items:center}
.filter{height:24px;flex:none;background:#fff;border:1px solid #b8b8b8;border-radius:3px;color:#8c8c8c;padding:0 4px;line-height:22px}
.wbfilter{margin:2px 3px 5px 3px;width:122px}
.wbox{flex:1;min-height:0;display:flex;width:129px;overflow:hidden}
.wlist{width:115px;flex:none;background:#fff;height:564px}
.cat{height:18px;display:flex;align-items:center;background:linear-gradient(#f4f4f4,#e8e8e8);border-top:1px solid #bdbdbd;border-bottom:1px solid #bdbdbd;border-left:1px solid #c8c8c8;padding-left:6px;color:#2b2b2b}
.cat span{flex:1;text-align:center;white-space:nowrap}
.adown{display:inline-block;width:0;height:0;border:4px solid transparent;border-top:4px solid #555;border-bottom:0;flex:none}
.adown.white{border-top-color:#e8e8e8}
.aright{display:inline-block;width:0;height:0;border:4px solid transparent;border-left:4px solid #555;border-right:0;flex:none}
.wi{height:24px;display:flex;align-items:center;gap:7px;padding-left:4px;white-space:nowrap;border-left:1px solid #c8c8c8;border-right:1px solid #c8c8c8}
.wi svg{flex:none}

.sbar{width:14px;flex:none;display:flex;flex-direction:column;background:#e4e4e4;border-left:1px solid #d0d0d0;border-right:1px solid #d0d0d0;border-bottom:1px solid #bdbdbd}
.sb-btn{height:14px;flex:none;background:#f2f2f2;border-top:1px solid #c8c8c8;border-bottom:1px solid #d4d4d4;display:flex;align-items:center;justify-content:center}
.sb-end{border-top:1px solid #d4d4d4;border-bottom:0}
.sb-handle{flex:none;background:#f7f7f7;border-bottom:1px solid #d0d0d0}
.sb-track{flex:1}
.h-wb{height:140px}.h-oi{height:81px}.h-pe{height:64px}
.sup{display:block;width:0;height:0;border:4px solid transparent;border-bottom:4px solid #444;border-top:0}
.sdn{display:block;width:0;height:0;border:4px solid transparent;border-top:4px solid #444;border-bottom:0}

.mdi{position:relative;flex:0 0 879px;margin:2px 6px 0 6px;background:#9c9c9c}
.win{position:absolute;display:flex;flex-direction:column}
.win-kat{left:26px;top:12px;width:406px;height:560px}
.win-ker{left:436px;top:12px;width:397px;height:489px}
.wt{flex:0 0 23px;display:flex;align-items:center;padding-left:5px;border-radius:7px 7px 0 0;background:linear-gradient(#ffffff,#f2f2f2 35%,#e7e7e7 50%,#f1f1f1);border-bottom:1px solid #9a9a9a;color:#333}
.wt-act{background:linear-gradient(#3a9be0,#2f8fd2 45%,#2a7fbc 55%,#2f85c4);border:1px solid #1c6aa0;color:#f2f2f2}
.wt-act .wtt{text-shadow:0 0 2px #14456a}
.dicon{width:16px;height:12px;flex:none}
.wtt{white-space:nowrap}
.wtt-kat{margin-left:106px;margin-right:auto}
.wtt-ker{margin-left:96px;margin-right:auto}
.wb{width:17px;height:17px;border:1px solid #777;border-radius:3px;margin-right:3px;text-align:center;line-height:13px;font-size:12px;font-weight:bold;color:#222;flex:none;background:#f4f4f4;display:flex;align-items:center;justify-content:center}
.wbx{color:#000;margin-right:5px}
.wxi{width:15px;height:15px;display:block}
.wt-act .wb{background:#2f85c4;border-color:#1b5f90;color:#fff}
.wt-act .wbx{margin-right:4px}
.fb{flex:1;display:flex;flex-direction:column;background-color:#efefef;border:1px solid #8a8a8a;border-top:0;background-image:radial-gradient(circle at .5px .5px,#8c8c8c .5px,transparent .6px);background-size:10px 10px}
.fb-kat{padding:0 21px 0 32px;background-position:2px 10px}
.fb-ker{padding:0 21px 0 33px;background-position:4px 10px}
.fh{margin:0 0 0 101px;height:32px;font:bold 27px/32px "Noto Sans","Open Sans",sans-serif;letter-spacing:0;color:#000;white-space:nowrap}
.fh-kat{margin-top:35px;margin-bottom:23px;margin-left:100px}
.fh-ker{margin-top:15px;margin-bottom:33px;letter-spacing:.3px}
.row{display:grid;grid-template-columns:150px 1fr;height:24px;flex:none}
.rk{grid-template-columns:120px 1fr}
.rd{height:23px}
.rk .lb{padding-left:10px}
.lb{font-size:12px;font-weight:bold;letter-spacing:0;color:#111;white-space:nowrap;line-height:16px;display:block;padding-top:1px}
.l10{margin-top:10px}
.ln1{margin-top:-1px}
.mt6{margin-top:6px}.mt7{margin-top:7px}.mt16{margin-top:16px}
.inp{display:flex;background:#fff;border:1px solid #b4b4b4;border-radius:3px}
.date{align-items:stretch;justify-content:space-between}
.dv{padding-left:3px;line-height:22px;color:#333}
.rk .dv{padding-left:4px}
.spin{width:15px;border-left:1px solid #c4c4c4;background:#f2f2f2;display:flex;flex-direction:column;align-items:center;justify-content:center;gap:3px;border-radius:0 3px 3px 0}
.btns{display:flex;gap:10px;flex:none}
.btn{display:block;flex:0 0 80px;height:24px;background:linear-gradient(#fafafa,#ececec);border:1px solid #b4b4b4;border-radius:3px;text-align:center;line-height:22px;color:#222}
.btn.last{flex:1}
.ta{background:#fff;border:1px solid #b4b4b4;border-radius:2px;margin-top:6px;flex:none}
.ta-kat{height:192px}
.ta-ker{height:111px}
.clear{flex:none}
.clear-kat{margin-top:8px}
.clear-ker{margin-top:9px}

.rightdock{flex:0 0 345px;display:flex;flex-direction:column;overflow:hidden}
.rtitle{padding:0 2px 0 4px}
.oifilter{height:23px;line-height:21px;margin-top:-1px;margin-bottom:6px}
.oi{height:190px;flex:none;display:flex;border:1px solid #bdbdbd;border-right:0;overflow:hidden}
.oi-main{flex:1;min-width:0;background:#fff;overflow:hidden}
.oi .sbar,.pe .sbar{border-bottom:0;border-right:1px solid #bdbdbd}
.thead{height:20px;display:grid;background:linear-gradient(#f6f6f6,#ececec);border-bottom:1px solid #c8c8c8;line-height:20px;color:#222}
.thead span{padding-left:2px;height:19px}
.thead span+span{border-left:1px solid #d4d4d4;padding-left:3px}
.oi-cols{grid-template-columns:138px 1fr}
.pe-cols{grid-template-columns:149px 1fr;height:21px}
.oir{height:16px;display:flex;align-items:center;white-space:nowrap;background:#fff}
.oir.alt{background:#f7f7f7}
.oir.sel{height:18px;background:#2e89c5;color:#e9f1f7;padding-left:7px}
.oir.sel .i18{margin-left:9px;width:17px;height:17px}
.fname{width:97px;margin-left:4px;flex:none}
.oname{width:142px;padding-left:43px;flex:none}
.cls{flex:1}
.pe-title{margin-top:5px}
.pe-tools{height:24px;flex:none;display:flex;align-items:center;margin:5px 0 8px 4px}
.pefilter{width:238px}
.plus{margin-left:6px}
.minus{width:22px;height:7px;background:linear-gradient(#e2e2e2,#bdbdbd);border:1px solid #aaa;margin:0 8px 0 10px}
.pe-obj{height:19px;flex:none;border:1px solid #c8c8c8;background:#f2f2f2;padding-left:2px;line-height:18px;margin-bottom:2px}
.pe{flex:1;min-height:0;display:flex;border:1px solid #bdbdbd;border-right:0;overflow:hidden}
.pe-main{flex:1;min-width:0;background:#fff;overflow:hidden}
.pr{height:20px;display:grid;grid-template-columns:149px 1fr;border-bottom:1px solid #c8c8c8;line-height:19px;white-space:nowrap}
.pk{display:flex;align-items:center;padding-left:23px;border-right:1px solid #c8c8c8}
.pk i{margin-left:-17px;margin-right:9px}
.pk .aright{margin-right:11px;margin-left:-15px}
.pk.sub{padding-left:43px}
.pk b{font-size:12.2px;letter-spacing:0;color:#000}
.pv{padding-left:4px;display:flex;align-items:center}
.grp{background:#9c9c9c;color:#fafafa;font-weight:bold;border-bottom-color:#aaa}
.grp .pk{border-right:0}
.peach{background:#fff1df}
.y1{background:#ffffdf}
.y2{background:#ffffbf}
.cb{width:14px;height:14px;background:#fff;border:1px solid #aaa;border-radius:2px;font-size:12px;line-height:12px;text-align:center;color:#000;font-weight:bold;display:block}

.status{flex:0 0 21px;background:#f0f0f0;padding-left:6px;line-height:22px;color:#222}

.taskbar{flex:0 0 41px;background:#161616;display:flex;align-items:stretch;color:#fff}
.t-menu{width:44px;display:flex;align-items:center;justify-content:center;flex:none}
.t-sep{width:1px;background:#3a3a3a;margin:2px 6px 2px 8px;flex:none}
.task{position:relative;width:38px;margin:0 3px;flex:none;display:flex;align-items:center;justify-content:center;border-bottom:2px solid transparent}
.task.on{border-bottom-color:#f2703a}
.task.act{background:#4f4f4f}
.badge{position:absolute;left:1px;top:0;width:16px;height:16px;border-radius:50%;background:#f2703a;color:#fff;font-size:11px;line-height:16px;text-align:center;letter-spacing:0}
.tray{margin-left:auto;display:flex;align-items:center;height:41px}
.ty{display:flex;align-items:center;justify-content:center;flex:none;height:41px}
.ty-x{width:28px}
.ty-en{width:38px;color:#4a9cc8;font:bold 13px "DejaVu Sans",sans-serif;letter-spacing:0}
.ty-c{width:27px}.ty-s{width:28px}
.ty-t{width:44px;color:#bcd9f0;font:bold 13px "Noto Sans",sans-serif;letter-spacing:0}
.ty-end{width:11px;height:41px;background:#262626;flex:none}
```
